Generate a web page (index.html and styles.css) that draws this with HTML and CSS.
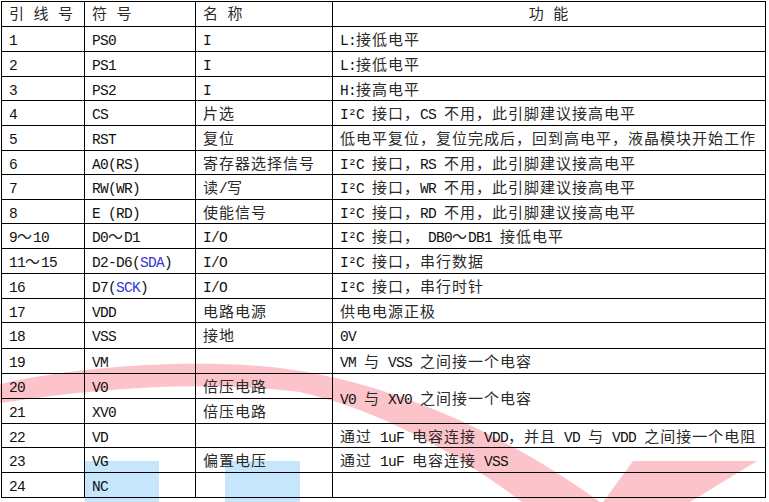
FILE: index.html
```html
<!DOCTYPE html>
<html lang="zh">
<head>
<meta charset="utf-8">
<title>引脚定义</title>
<link rel="stylesheet" href="styles.css">
</head>
<body>
<svg class="wm" width="769" height="502" viewBox="0 0 769 502" aria-hidden="true">
  <path class="wm-red" d="M0,384 C80,366 180,360 260,366 C380,376 500,430 600,502 L522,502 C460,455 380,410 300,392 C200,380 100,388 0,403 Z"/>
  <path class="wm-red" d="M633,461 L757,461 L690,502 L603,502 Z"/>
  <rect class="wm-blue" x="85" y="461" width="74" height="41"/>
  <rect class="wm-blue" x="225" y="461" width="75" height="41"/>
</svg>
<div class="tbl" role="table">
  <div class="cell hd"><span class="c">引&ensp;线&ensp;号</span></div>
  <div class="cell hd"><span class="c">符&ensp;号</span></div>
  <div class="cell hd"><span class="c">名&ensp;称</span></div>
  <div class="cell hd center"><span class="c">功&ensp;能</span></div>

  <div class="cell">1</div><div class="cell">PS0</div><div class="cell">I</div><div class="cell">L:<span class="c">接低电平</span></div>
  <div class="cell">2</div><div class="cell">PS1</div><div class="cell">I</div><div class="cell">L:<span class="c">接低电平</span></div>
  <div class="cell">3</div><div class="cell">PS2</div><div class="cell">I</div><div class="cell">H:<span class="c">接高电平</span></div>
  <div class="cell">4</div><div class="cell">CS</div><div class="cell"><span class="c">片选</span></div><div class="cell">I²C <span class="c">接口，</span>CS <span class="c">不用，此引脚建议接高电平</span></div>
  <div class="cell">5</div><div class="cell">RST</div><div class="cell"><span class="c">复位</span></div><div class="cell"><span class="c">低电平复位，复位完成后，回到高电平，液晶模块开始工作</span></div>
  <div class="cell">6</div><div class="cell">A0(RS)</div><div class="cell"><span class="c">寄存器选择信号</span></div><div class="cell">I²C <span class="c">接口，</span>RS <span class="c">不用，此引脚建议接高电平</span></div>
  <div class="cell">7</div><div class="cell">RW(WR)</div><div class="cell"><span class="c">读</span>/<span class="c">写</span></div><div class="cell">I²C <span class="c">接口，</span>WR <span class="c">不用，此引脚建议接高电平</span></div>
  <div class="cell">8</div><div class="cell">E (RD)</div><div class="cell"><span class="c">使能信号</span></div><div class="cell">I²C <span class="c">接口，</span>RD <span class="c">不用，此引脚建议接高电平</span></div>
  <div class="cell">9<span class="c">～</span>10</div><div class="cell">D0<span class="c">～</span>D1</div><div class="cell">I/O</div><div class="cell">I²C <span class="c">接口，</span> DB0<span class="c">～</span>DB1 <span class="c">接低电平</span></div>
  <div class="cell">11<span class="c">～</span>15</div><div class="cell">D2-D6(<span class="blue">SDA</span>)</div><div class="cell">I/O</div><div class="cell">I²C <span class="c">接口，串行数据</span></div>
  <div class="cell">16</div><div class="cell">D7(<span class="blue">SCK</span>)</div><div class="cell">I/O</div><div class="cell">I²C <span class="c">接口，串行时针</span></div>
  <div class="cell">17</div><div class="cell">VDD</div><div class="cell"><span class="c">电路电源</span></div><div class="cell"><span class="c">供电电源正极</span></div>
  <div class="cell">18</div><div class="cell">VSS</div><div class="cell"><span class="c">接地</span></div><div class="cell">0V</div>
  <div class="cell">19</div><div class="cell">VM</div><div class="cell"></div><div class="cell">VM <span class="c">与</span> VSS <span class="c">之间接一个电容</span></div>
  <div class="cell">20</div><div class="cell">V0</div><div class="cell"><span class="c">倍压电路</span></div><div class="cell span2">V0 <span class="c">与</span> XV0 <span class="c">之间接一个电容</span></div>
  <div class="cell">21</div><div class="cell">XV0</div><div class="cell"><span class="c">倍压电路</span></div>
  <div class="cell">22</div><div class="cell">VD</div><div class="cell"></div><div class="cell"><span class="c">通过</span> 1uF <span class="c">电容连接</span> VDD<span class="c">，并且</span> VD <span class="c">与</span> VDD <span class="c">之间接一个电阻</span></div>
  <div class="cell">23</div><div class="cell">VG</div><div class="cell"><span class="c">偏置电压</span></div><div class="cell"><span class="c">通过</span> 1uF <span class="c">电容连接</span> VSS</div>
  <div class="cell">24</div><div class="cell">NC</div><div class="cell"></div><div class="cell"></div>
</div>
</body>
</html>
```

FILE: styles.css
```css
html, body {
  margin: 0;
  padding: 0;
  background: #ffffff;
}

body {
  position: relative;
  width: 769px;
  height: 502px;
  overflow: hidden;
  color: #111111;
}

.wm {
  position: absolute;
  left: 0;
  top: 0;
  z-index: 0;
}

.wm-red {
  fill: #fcc4ca;
}

.wm-blue {
  fill: #c6e7fb;
}

.tbl {
  position: relative;
  z-index: 1;
  display: grid;
  grid-template-columns: 83px 111px 137px 433px;
  grid-template-rows: 25px 25px 25px 24px 25px 25px 24px 25px 24px 25px 25px 25px 24px 26px 25px 25px 25px 24px 25px 25px;
  width: max-content;
  margin: 1px 0 0 1px;
  border-top: 1px solid #000;
  border-left: 1px solid #000;
  font-family: "Liberation Mono", "Noto Sans CJK SC", monospace;
  font-size: 14.5px;
  letter-spacing: -0.7px;
}

.cell {
  box-sizing: border-box;
  display: block;
  padding: 7px 0 0 7px;
  border-right: 1px solid #000;
  border-bottom: 1px solid #000;
  white-space: pre;
  line-height: 15px;
}

.hd {
  padding-top: 6px;
}

.center {
  text-align: center;
  padding-left: 0;
}

.span2 {
  grid-column: 4;
  grid-row: span 2;
  padding-top: 19px;
}

.c {
  font-family: "Noto Sans CJK SC", sans-serif;
  font-size: 15px;
  letter-spacing: 1px;
  line-height: 0;
  color: #2a2a2a;
}

.blue {
  color: #3434d4;
}
```
